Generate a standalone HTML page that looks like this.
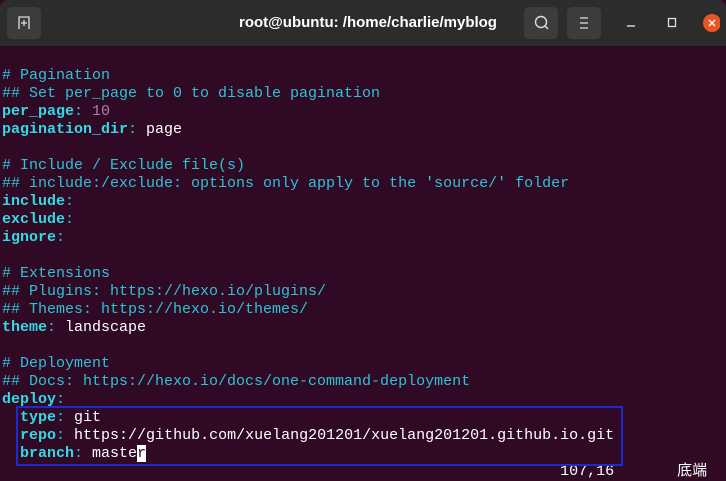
<!DOCTYPE html>
<html><head><meta charset="utf-8"><style>
body{margin:0;width:726px;height:481px;background:#300a24;overflow:hidden;position:relative;font-family:"Liberation Mono","Noto Sans CJK SC",monospace}
.tb{position:absolute;left:0;top:0;width:726px;height:46px;background:#2c2c2c;border-radius:8px 8px 0 0}
.btn{position:absolute;top:7px;width:34px;height:32px;background:#3c3c3c;border-radius:5px}
.title{position:absolute;left:0;width:736px;top:14px;text-align:center;color:#fff;font:bold 15px "Liberation Sans",sans-serif}
.t{position:absolute;left:2px;top:49px;font-size:15px;line-height:18px;color:#fff;white-space:pre}
.c{color:#2ec2d6}.k{color:#34d9e6;font-weight:bold}.n{color:#ad7fa8}
.box{position:absolute;left:16px;top:406px;width:603px;height:56px;border:2px solid #1d2ad0}
.cur{background:#fff;color:#300a24}
</style></head><body>
<div class="tb">
<div class="btn" style="left:7px"><svg width="34" height="32"><path d="M12 22V10h10v12M17 13v6M14 16h6" stroke="#ddd" stroke-width="1.3" fill="none"/></svg></div>
<div class="title">root@ubuntu: /home/charlie/myblog</div>
<div class="btn" style="left:524px"><svg width="34" height="32"><circle cx="17" cy="15" r="5.5" stroke="#ddd" stroke-width="1.4" fill="none"/><path d="M21 19l3 3" stroke="#ddd" stroke-width="1.4"/></svg></div>
<div class="btn" style="left:567px"><svg width="34" height="32"><path d="M13 11h8M13 16h8M13 21h8" stroke="#ddd" stroke-width="1.3"/></svg></div>
<svg style="position:absolute;left:620px;top:10px" width="100" height="28"><path d="M7 16h8" stroke="#ddd" stroke-width="1.4"/><rect x="48.5" y="8.5" width="7" height="8" stroke="#ddd" stroke-width="1.3" fill="none"/><circle cx="92" cy="13" r="9" fill="#e95420"/><path d="M89 10l6 6M95 10l-6 6" stroke="#fff" stroke-width="1.4"/></svg>
</div>
<div class="t">
<span class="c"># Pagination</span>
<span class="c">## Set per_page to 0 to disable pagination</span>
<span class="k">per_page</span><span class="c">:</span> <span class="n">10</span>
<span class="k">pagination_dir</span><span class="c">:</span> page

<span class="c"># Include / Exclude file(s)</span>
<span class="c">## include:/exclude: options only apply to the 'source/' folder</span>
<span class="k">include</span><span class="c">:</span>
<span class="k">exclude</span><span class="c">:</span>
<span class="k">ignore</span><span class="c">:</span>

<span class="c"># Extensions</span>
<span class="c">## Plugins: https://hexo.io/plugins/</span>
<span class="c">## Themes: https://hexo.io/themes/</span>
<span class="k">theme</span><span class="c">:</span> landscape

<span class="c"># Deployment</span>
<span class="c">## Docs: https://hexo.io/docs/one-command-deployment</span>
<span class="k">deploy</span><span class="c">:</span>
  <span class="k">type</span><span class="c">:</span> git
  <span class="k">repo</span><span class="c">:</span> https://github.com/xuelang201201/xuelang201201.github.io.git
  <span class="k">branch</span><span class="c">:</span> maste<span class="cur">r</span>
                                                              107,16       底端</div>
<div class="box"></div>
</body></html>
